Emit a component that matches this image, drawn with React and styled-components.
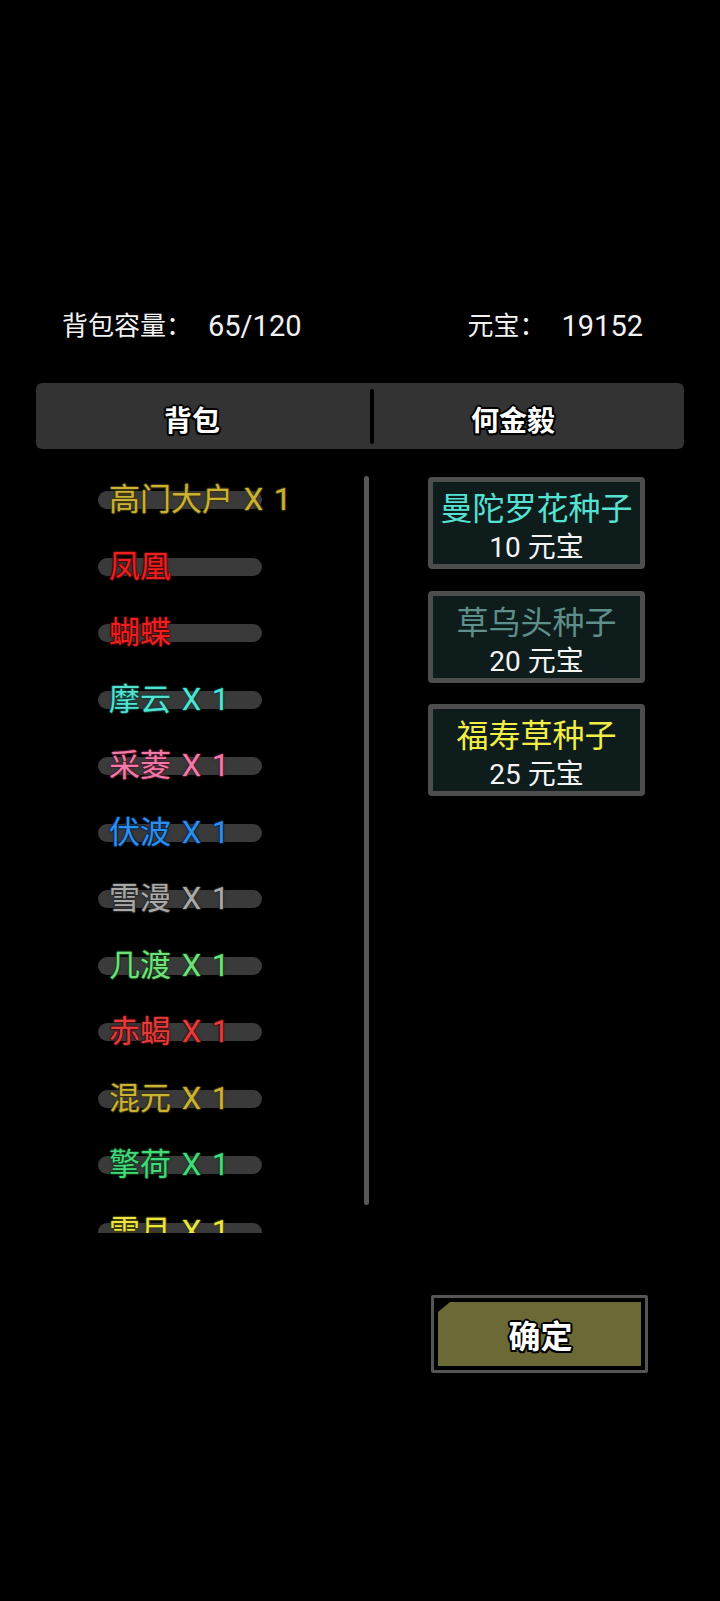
import React from "react";
import styled, { createGlobalStyle } from "styled-components";

const Global = createGlobalStyle`
  html, body { margin: 0; padding: 0; background: #000; }
  body { font-family: Roboto, "Noto Sans CJK SC", sans-serif; }
  * { box-sizing: border-box; }
`;

const Page = styled.div`
  width: 720px;
  height: 1601px;
  background: #000;
  padding-top: 309px;
  overflow: hidden;
`;

const Header = styled.div`
  display: flex;
  justify-content: space-between;
  align-items: center;
  padding: 0 77px 0 62px;
  height: 34px;
  line-height: 34px;
  font-size: 26px;
  color: #f2f2f2;
`;

const Stat = styled.div`
  display: flex;
  align-items: center;
  white-space: nowrap;
`;

const StatValue = styled.span`
  margin-left: ${(p) => p.$gap}px;
  font-size: 29px;
`;

const TabBar = styled.div`
  margin: 40px 36px 0;
  height: 66px;
  background: #333333;
  border-radius: 6px;
  display: flex;
  align-items: center;
`;

const Tab = styled.div`
  ${(p) => (p.$width ? `width: ${p.$width}px;` : "flex: 1;")}
  text-align: center;
  padding-right: ${(p) => p.$shift}px;
  padding-top: 6px;
  font-size: 28px;
  font-weight: 700;
  color: #fff;
  text-shadow: -2px 0 0 #000, 2px 0 0 #000, 0 -2px 0 #000, 0 2px 0 #000,
    -1.5px -1.5px 0 #000, 1.5px 1.5px 0 #000, -1.5px 1.5px 0 #000, 1.5px -1.5px 0 #000;
`;

const Divider = styled.div`
  width: 4px;
  height: 55px;
  border-radius: 2px;
  background: #000;
`;

const Content = styled.div`
  display: flex;
  margin-top: 18px;
`;

const List = styled.div`
  width: 364px;
  height: 766px;
  overflow: hidden;
  padding-left: 98px;
`;

const Row = styled.div`
  height: 66.5px;
  display: flex;
  align-items: center;
`;

const Pill = styled.div`
  width: 164px;
  height: 18px;
  border-radius: 9px;
  background: #3a3a3a;
  display: flex;
  align-items: center;
  padding-left: 11px;
  white-space: nowrap;
  font-size: 31px;
  word-spacing: 3px;
  line-height: 18px;
  color: ${(p) => p.$color};
  text-shadow: -1px 0 0 ${(p) => p.$edge}, 1px 0 0 ${(p) => p.$edge},
    0 -1px 0 ${(p) => p.$edge}, 0 1px 0 ${(p) => p.$edge},
    0 0 3px ${(p) => p.$edge};
`;

const Scrollbar = styled.div`
  width: 5px;
  height: 729px;
  margin-top: 9px;
  border-radius: 3px;
  background: #585858;
`;

const Shop = styled.div`
  margin-left: 59px;
  margin-top: 10px;
  display: flex;
  flex-direction: column;
  gap: 21.5px;
`;

const Card = styled.div`
  width: 217px;
  height: 92px;
  border: 5px solid #4d4d4d;
  border-radius: 4px;
  background: #0e1c1c;
  display: flex;
  flex-direction: column;
  align-items: center;
  padding-top: 8px;
`;

const CardTitle = styled.div`
  font-size: 32px;
  line-height: 39px;
  color: ${(p) => p.$color};
  white-space: nowrap;
`;

const Price = styled.div`
  margin-top: 1px;
  font-size: 28px;
  line-height: 35px;
  color: #f4f4f4;
  white-space: nowrap;
`;

const ConfirmFrame = styled.div`
  margin: 62px 0 0 431px;
  width: 217px;
  height: 78px;
  border: 3px solid #555;
  border-radius: 2px;
  padding: 4px;
  background: #000;
`;

const ConfirmFill = styled.div`
  height: 100%;
  background: #6b6936;
  clip-path: polygon(12px 0, 100% 0, 100% 100%, 0 100%, 0 10px);
  display: flex;
  align-items: center;
  justify-content: center;
  font-size: 32px;
  font-weight: 700;
  color: #fff;
  padding-left: 2px;
  text-shadow: -2px 0 0 #000, 2px 0 0 #000, 0 -2px 0 #000, 0 2px 0 #000,
    -1.5px -1.5px 0 #000, 1.5px 1.5px 0 #000, -1.5px 1.5px 0 #000, 1.5px -1.5px 0 #000;
`;

const items = [
  { name: "高门大户 X 1", color: "#c9b234", edge: "#3d3410" },
  { name: "凤凰", color: "#ee1f1f", edge: "#4a0808" },
  { name: "蝴蝶", color: "#ee1f1f", edge: "#4a0808" },
  { name: "摩云 X 1", color: "#52e3d2", edge: "#0f3c38" },
  { name: "采菱 X 1", color: "#f27aa8", edge: "#4a1c2c" },
  { name: "伏波 X 1", color: "#2a8ff0", edge: "#0a2444" },
  { name: "雪漫 X 1", color: "#a9a9a9", edge: "#2a2a2a" },
  { name: "几渡 X 1", color: "#70e07c", edge: "#173c1a" },
  { name: "赤蝎 X 1", color: "#e43c3c", edge: "#480e0e" },
  { name: "混元 X 1", color: "#c9b234", edge: "#3d3410" },
  { name: "擎荷 X 1", color: "#42d97a", edge: "#0f3a1e" },
  { name: "雪月 X 1", color: "#ece642", edge: "#403c0e" },
];

const goods = [
  { name: "曼陀罗花种子", price: "10 元宝", color: "#55e2d2" },
  { name: "草乌头种子", price: "20 元宝", color: "#5e8f8b" },
  { name: "福寿草种子", price: "25 元宝", color: "#f2ee46" },
];

export default function App() {
  return (
    <>
      <Global />
      <Page>
        <Header>
          <Stat>
            背包容量：<StatValue $gap={16}>65/120</StatValue>
          </Stat>
          <Stat>
            元宝：<StatValue $gap={16}>19152</StatValue>
          </Stat>
        </Header>
        <TabBar>
          <Tab $width={334} $shift={22}>背包</Tab>
          <Divider />
          <Tab $shift={32}>何金毅</Tab>
        </TabBar>
        <Content>
          <List>
            {items.map((it, i) => (
              <Row key={i}>
                <Pill $color={it.color} $edge={it.edge}>
                  {it.name}
                </Pill>
              </Row>
            ))}
          </List>
          <Scrollbar />
          <Shop>
            {goods.map((g) => (
              <Card key={g.name}>
                <CardTitle $color={g.color}>{g.name}</CardTitle>
                <Price>{g.price}</Price>
              </Card>
            ))}
          </Shop>
        </Content>
        <ConfirmFrame>
          <ConfirmFill>确定</ConfirmFill>
        </ConfirmFrame>
      </Page>
    </>
  );
}
